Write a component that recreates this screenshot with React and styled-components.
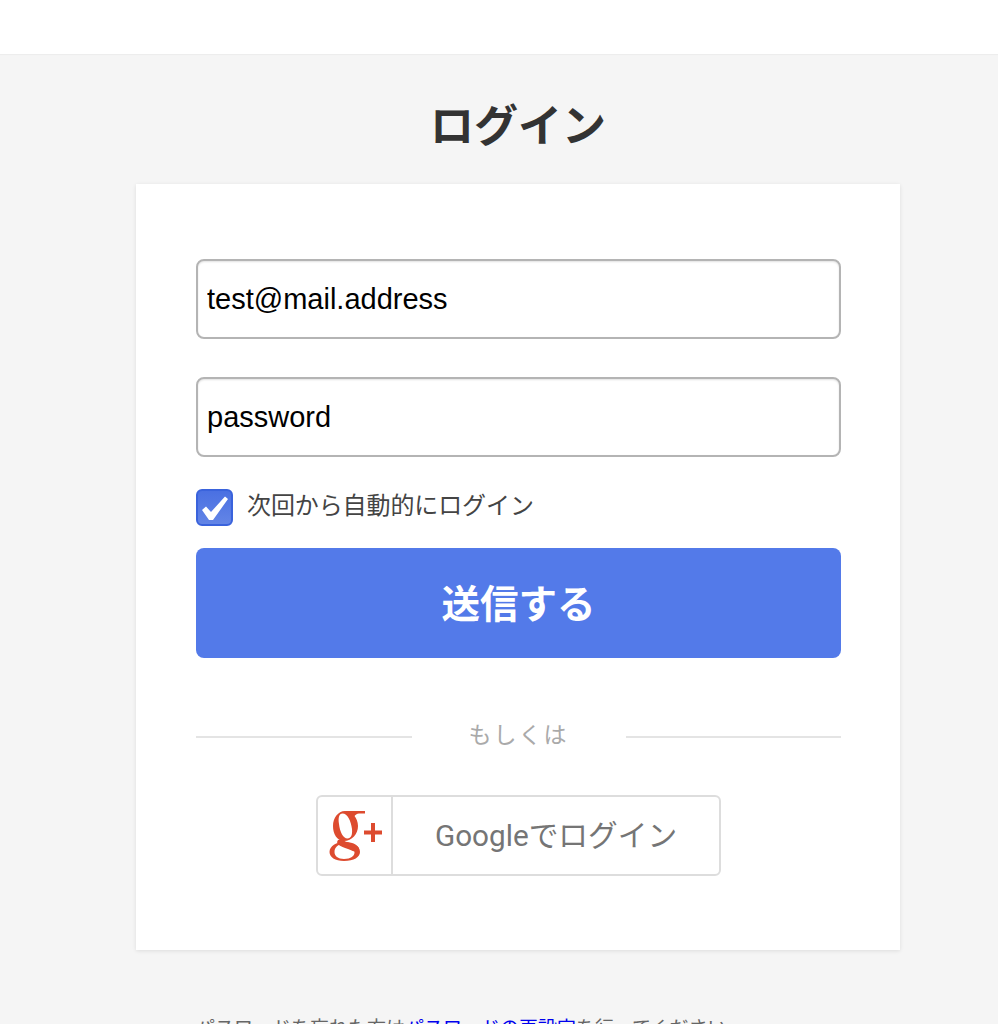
import styled, { createGlobalStyle } from "styled-components";

const JP = `"Liberation Sans", "Noto Sans CJK JP", sans-serif`;

const Global = createGlobalStyle`
  html, body {
    margin: 0;
    height: 100%;
    overflow: hidden;
    background: #f5f5f5;
    font-family: ${JP};
  }
`;

const Header = styled.header`
  height: 54px;
  background: #fff;
  box-shadow: 0 1px 1px rgba(0, 0, 0, 0.03);
`;

const Main = styled.main`
  width: 764px;
  margin-left: 136px;
`;

const Title = styled.h1`
  margin: 0;
  height: 130px;
  line-height: 145px;
  text-align: center;
  font-size: 44px;
  font-weight: 700;
  color: #333;
`;

const Card = styled.form`
  box-sizing: border-box;
  height: 766px;
  padding: 75px 59px 0 60px;
  background: #fff;
  box-shadow: 0 1px 4px rgba(0, 0, 0, 0.1);
`;

const Field = styled.input`
  display: block;
  box-sizing: border-box;
  width: 100%;
  height: 80px;
  margin-bottom: 38px;
  padding: 0 9px;
  border: 2px solid #b4b4b4;
  border-radius: 8px;
  background: #fff;
  box-shadow: inset 0 1px 2px rgba(0, 0, 0, 0.12);
  font-family: ${JP};
  font-size: 29px;
  color: #000;
  outline: none;
`;

const Remember = styled.label`
  display: flex;
  align-items: center;
  gap: 14px;
  height: 36px;
  margin-top: -6px;
  font-size: 24px;
  line-height: 30px;
  color: #444;
`;

const RememberText = styled.span`
  margin-top: -3px;
  letter-spacing: -0.1px;
`;

const Box = styled.span`
  display: flex;
  align-items: center;
  justify-content: center;
  box-sizing: border-box;
  width: 37px;
  height: 37px;
  border: 2px solid #3a63dc;
  border-radius: 6px;
  background: linear-gradient(#4a70e2, #6385e6);
`;

const Submit = styled.button`
  display: block;
  width: 100%;
  height: 110px;
  margin-top: 23px;
  padding: 0 0 4px;
  border: 0;
  border-radius: 8px;
  background: #537ae9;
  color: #fff;
  font-family: ${JP};
  font-size: 38.5px;
  font-weight: 700;
`;

const Divider = styled.div`
  display: flex;
  align-items: center;
  gap: 57px;
  margin-top: 60px;
  height: 30px;
  font-size: 23px;
  letter-spacing: 2px;
  color: #aaa;
  &::before,
  &::after {
    content: "";
    flex: 1;
    height: 2px;
    margin-top: 7px;
    background: #e4e4e4;
  }
`;

const GoogleButton = styled.button`
  display: flex;
  box-sizing: border-box;
  width: 405px;
  height: 81px;
  margin: 47px auto 0;
  padding: 0;
  border: 2px solid #ddd;
  border-radius: 6px;
  background: #fff;
`;

const GoogleMark = styled.span`
  display: flex;
  align-items: center;
  justify-content: center;
  box-sizing: content-box;
  width: 70px;
  height: 100%;
  padding-left: 3px;
  border-right: 2px solid #ddd;
`;

const GoogleLabel = styled.span`
  flex: 1;
  align-self: center;
  margin-top: -5px;
  text-align: center;
  font-family: Roboto, "Noto Sans CJK JP", sans-serif;
  font-size: 29.7px;
  color: #757575;
`;

const Note = styled.p`
  margin: 65px 0 0 60px;
  font-size: 19px;
  line-height: 28px;
  white-space: nowrap;
  color: #666;
  a {
    color: #0000ee;
    text-decoration: none;
  }
`;

function Check() {
  return (
    <svg width="33" height="33" viewBox="0 0 33 33">
      <polygon
        points="4,19 8,15.5 13,21 27,5.5 30,8 15,29 11,29"
        fill="#fff"
        style={{ filter: "blur(0.5px)" }}
      />
    </svg>
  );
}

function GooglePlus() {
  return (
    <svg width="56" height="54" viewBox="4 4 56 54">
      <g fill="#dd4b2f">
        <path
          fillRule="evenodd"
          d="M21 6 C28 6 34 13 34 21 C34 29 28 36 20 36 C13 36 9 29 9 21 C9 13 14 6 21 6 Z M18.5 8.5 C15 8.5 14 13 15 19 C16 27 19 33.5 23.5 33.5 C27 33.5 28.5 30 28 24 C27 16 23.5 8.5 18.5 8.5 Z"
        />
        <path d="M21 6 H41 V8.5 H35 C33 8.5 31 10 30 12 Z" />
        <path d="M14 35 C11 39 16 41 24 44 C30 46.5 33 48 35 45 C36 41 29 39 23 37 C20 36 19 35 21 34 Z" />
        <path
          fillRule="evenodd"
          d="M21 37 C30 37 36 41 36 47 C36 52 30 56 20 56 C11 56 5.5 52 5.5 47 C5.5 41 12 37 21 37 Z M20 39 C14 39 10.5 42.5 10.5 47 C10.5 51 14 54 20 54 C27 54 30.5 51 30.5 47.5 C30.5 43 26 39 20 39 Z"
        />
      </g>
      <path d="M40 27.5 H58 M49 18 V37" fill="none" stroke="#dd4b2f" strokeWidth="4" />
    </svg>
  );
}

export default function App() {
  return (
    <>
      <Global />
      <Header />
      <Main>
        <Title>ログイン</Title>
        <Card>
          <Field type="text" defaultValue="test@mail.address" />
          <Field type="text" defaultValue="password" />
          <Remember>
            <Box>
              <Check />
            </Box>
            <RememberText>次回から自動的にログイン</RememberText>
          </Remember>
          <Submit type="button">送信する</Submit>
          <Divider>もしくは</Divider>
          <GoogleButton type="button">
            <GoogleMark>
              <GooglePlus />
            </GoogleMark>
            <GoogleLabel>Googleでログイン</GoogleLabel>
          </GoogleButton>
        </Card>
        <Note>
          パスワードを忘れた方は<a href="#reset">パスワードの再設定</a>を行ってください
        </Note>
      </Main>
    </>
  );
}
